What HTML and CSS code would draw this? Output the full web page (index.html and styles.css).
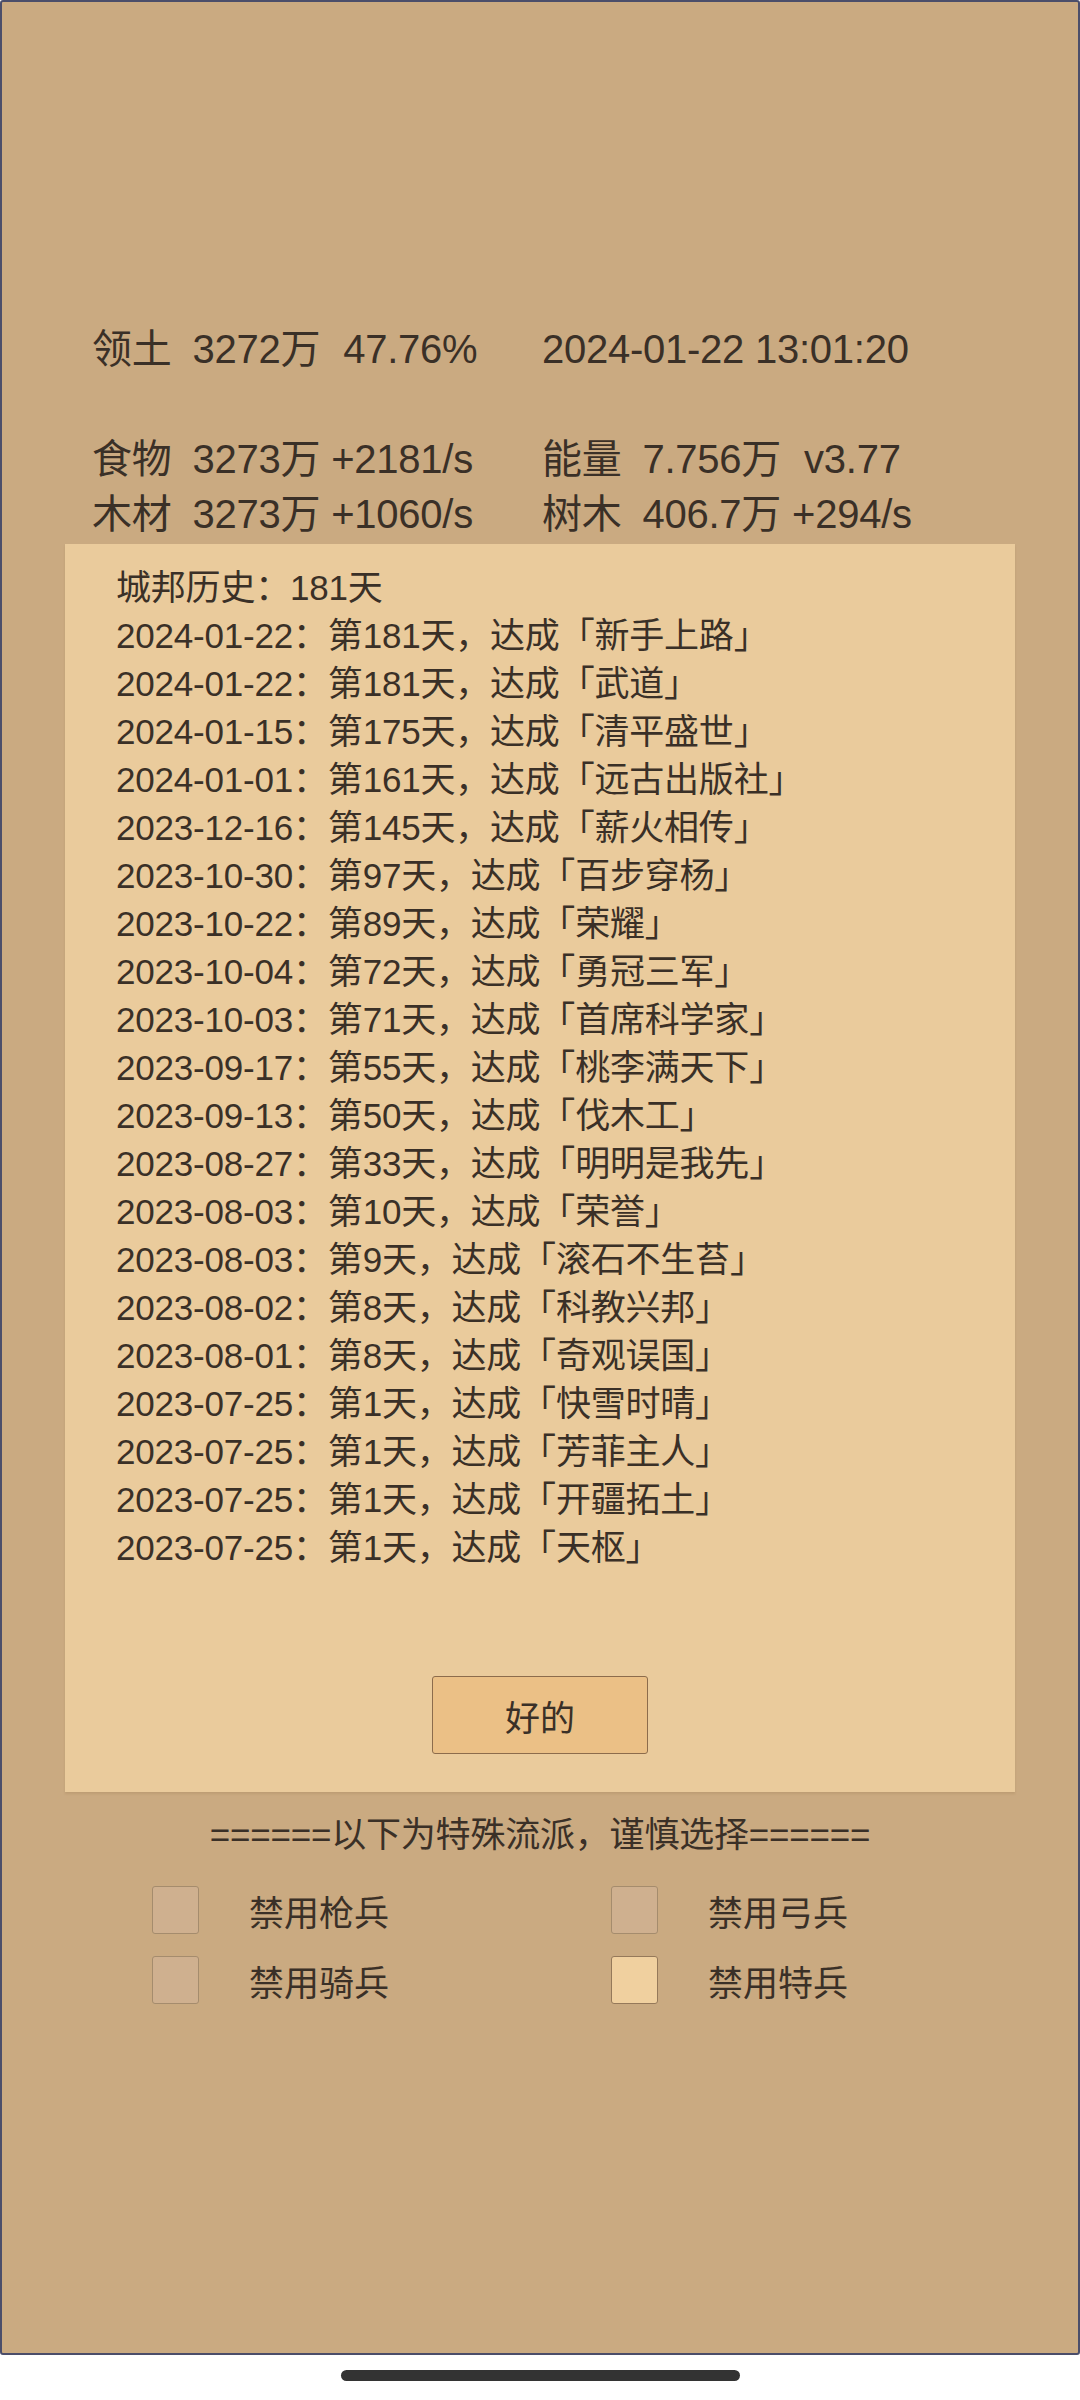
FILE: index.html
```html
<!DOCTYPE html>
<html lang="zh">
<head>
<meta charset="utf-8">
<title>城邦历史</title>
<link rel="stylesheet" href="styles.css">
</head>
<body>
<div class="frame">
  <div class="stats">
    <div class="row">
      <div class="cell"><span class="lbl">领土</span><span class="val">3272万</span><span class="pct">47.76%</span></div>
      <div class="cell">2024-01-22 13:01:20</div>
    </div>
    <div class="row blank"></div>
    <div class="row">
      <div class="cell"><span class="lbl">食物</span><span class="val">3273万</span><span class="rate">+2181/s</span></div>
      <div class="cell"><span class="lbl">能量</span><span class="val">7.756万</span><span class="pct">v3.77</span></div>
    </div>
    <div class="row">
      <div class="cell"><span class="lbl">木材</span><span class="val">3273万</span><span class="rate">+1060/s</span></div>
      <div class="cell"><span class="lbl">树木</span><span class="val">406.7万</span><span class="rate">+294/s</span></div>
    </div>
  </div>

  <div class="panel">
    <div class="history">
      <div>城邦历史：181天</div>
      <div>2024-01-22：第181天，达成「新手上路」</div>
      <div>2024-01-22：第181天，达成「武道」</div>
      <div>2024-01-15：第175天，达成「清平盛世」</div>
      <div>2024-01-01：第161天，达成「远古出版社」</div>
      <div>2023-12-16：第145天，达成「薪火相传」</div>
      <div>2023-10-30：第97天，达成「百步穿杨」</div>
      <div>2023-10-22：第89天，达成「荣耀」</div>
      <div>2023-10-04：第72天，达成「勇冠三军」</div>
      <div>2023-10-03：第71天，达成「首席科学家」</div>
      <div>2023-09-17：第55天，达成「桃李满天下」</div>
      <div>2023-09-13：第50天，达成「伐木工」</div>
      <div>2023-08-27：第33天，达成「明明是我先」</div>
      <div>2023-08-03：第10天，达成「荣誉」</div>
      <div>2023-08-03：第9天，达成「滚石不生苔」</div>
      <div>2023-08-02：第8天，达成「科教兴邦」</div>
      <div>2023-08-01：第8天，达成「奇观误国」</div>
      <div>2023-07-25：第1天，达成「快雪时晴」</div>
      <div>2023-07-25：第1天，达成「芳菲主人」</div>
      <div>2023-07-25：第1天，达成「开疆拓土」</div>
      <div>2023-07-25：第1天，达成「天枢」</div>
    </div>
    <div class="actions"><button class="ok">好的</button></div>
  </div>

  <div class="special">======以下为特殊流派，谨慎选择======</div>
  <div class="options">
    <label class="opt"><span class="box"></span><span class="optlbl">禁用枪兵</span></label>
    <label class="opt"><span class="box"></span><span class="optlbl">禁用弓兵</span></label>
    <label class="opt"><span class="box"></span><span class="optlbl">禁用骑兵</span></label>
    <label class="opt"><span class="box checked"></span><span class="optlbl">禁用特兵</span></label>
  </div>
</div>
<div class="home"><div class="bar"></div></div>
</body>
</html>
```

FILE: styles.css
```css
html, body {
  margin: 0;
  padding: 0;
  background: #ffffff;
}
body {
  width: 1080px;
  font-family: "Liberation Sans", "Noto Sans CJK SC", sans-serif;
  color: #3a3027;
}
.frame {
  box-sizing: border-box;
  height: 2355px;
  border: 2px solid #4b4e6a;
  border-radius: 3px;
  background: #caaa81;
  overflow: hidden;
}
.stats {
  padding-top: 320px;
  font-size: 40px;
  line-height: 55px;
  letter-spacing: -0.25px;
}
.row {
  display: grid;
  grid-template-columns: 450px 1fr;
  padding-left: 90px;
  height: 55px;
  white-space: nowrap;
}
.lbl { margin-right: 21px; }
.val { margin-right: 23px; }
.rate { margin-left: -12px; }
.panel {
  margin: 2px 63px 0;
  background: #eacb9c;
  padding: 20px 51px 38px;
  box-shadow: 0 2px 2px rgba(120, 90, 50, 0.15);
}
.history {
  font-size: 35px;
  line-height: 48px;
  letter-spacing: -0.2px;
  white-space: nowrap;
}
.actions {
  display: flex;
  justify-content: center;
  margin-top: 104px;
}
.ok {
  box-sizing: border-box;
  width: 216px;
  height: 78px;
  background: #ebc086;
  border: 1px solid #8c6c4c;
  border-radius: 3px;
  font-family: "Liberation Sans", "Noto Sans CJK SC", sans-serif;
  font-size: 35px;
  color: #3a3027;
  padding: 0;
}
.special {
  margin-top: 19px;
  text-align: center;
  font-size: 35px;
  line-height: 48px;
  letter-spacing: -0.2px;
}
.options {
  display: grid;
  grid-template-columns: 459px 459px;
  row-gap: 22px;
  padding-left: 150px;
  margin-top: 27px;
}
.opt {
  display: flex;
  align-items: center;
  height: 48px;
  font-size: 35px;
}
.box {
  box-sizing: border-box;
  width: 47px;
  height: 48px;
  background: #cfb08f;
  border: 1px solid #a58c6d;
  border-radius: 3px;
}
.box.checked {
  background: #f0d09f;
  border-color: #95795a;
}
.optlbl {
  margin-left: 50px;
}
.home {
  height: 45px;
  display: flex;
  justify-content: center;
  padding-top: 15px;
  box-sizing: border-box;
}
.bar {
  width: 399px;
  height: 11px;
  border-radius: 6px;
  background: #333333;
}
```
